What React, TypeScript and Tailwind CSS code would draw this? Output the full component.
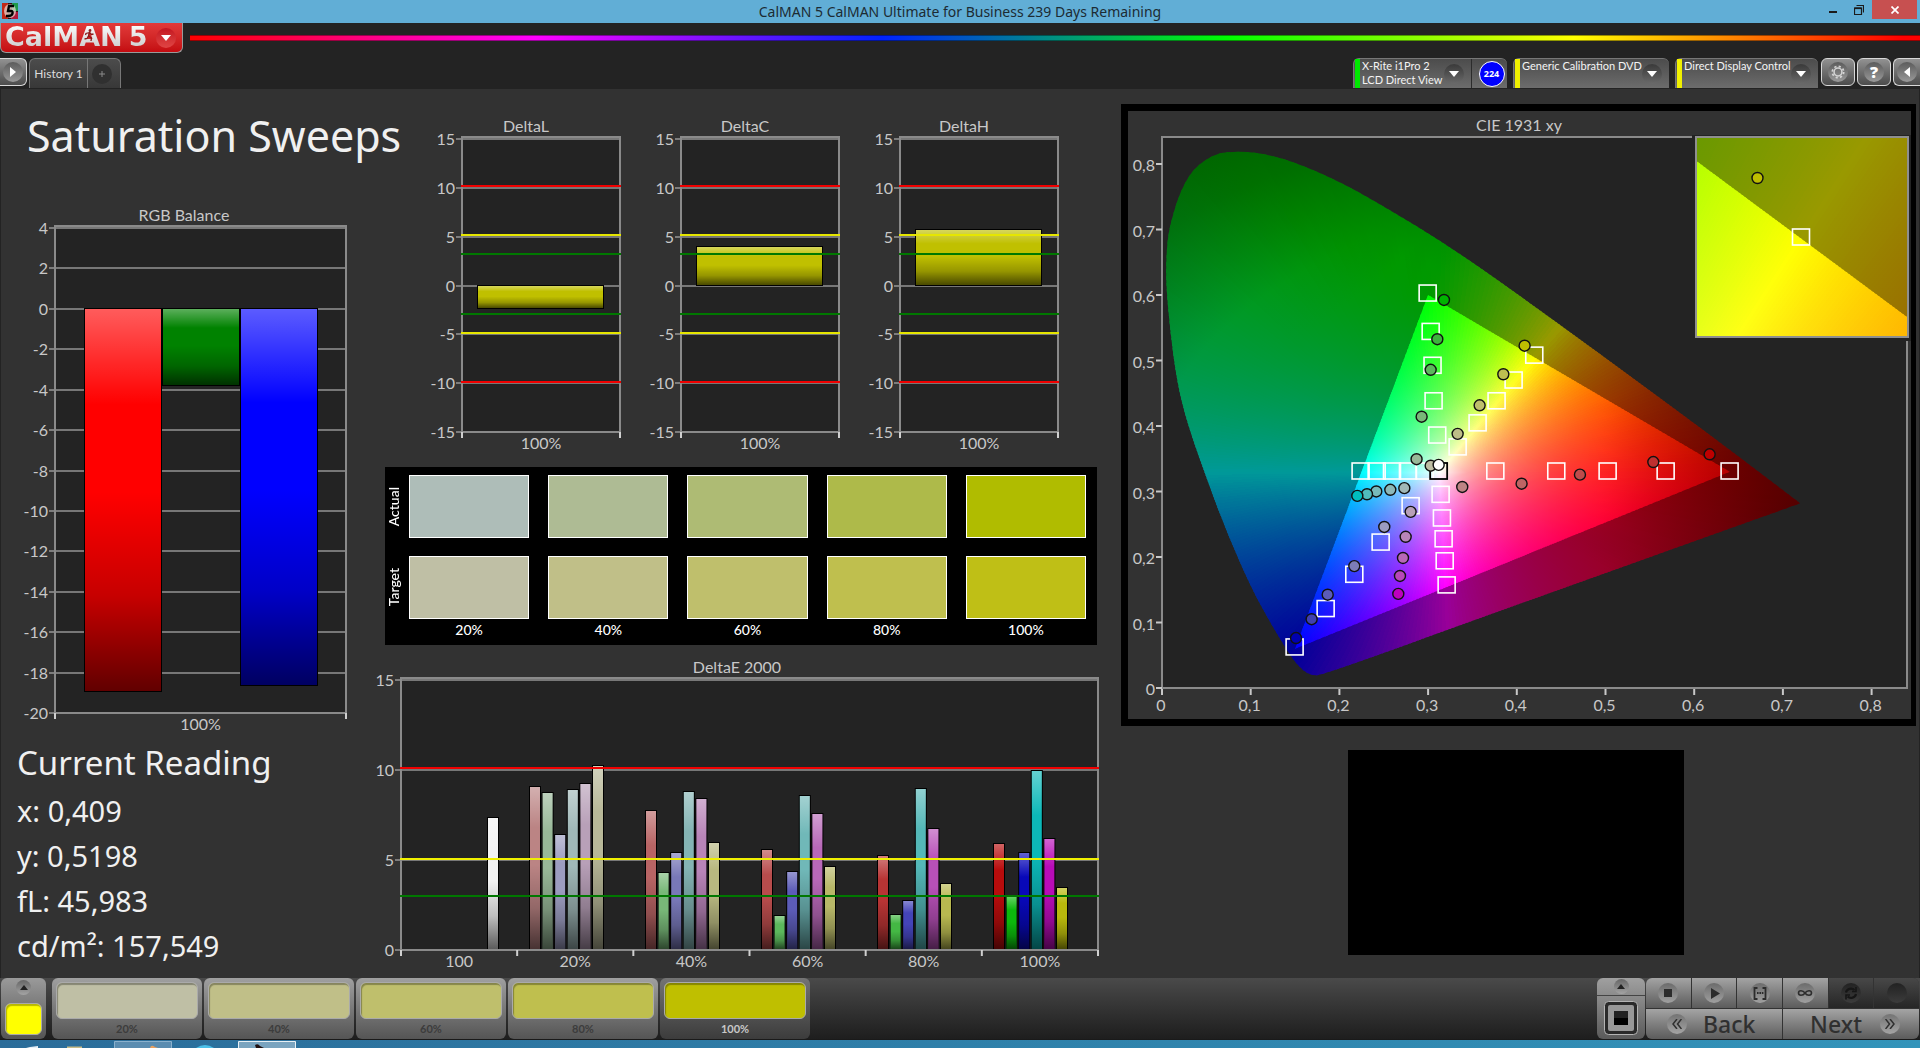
import { useState } from 'react'
import type { ReactNode } from 'react'

type Bar = { x: number; width: number; value: number; color: string }
type Limit = { value: number; color: string }
type Point = [number, number]

type ChartProps = {
  id: string
  title: string
  titleX: number
  width: number
  height: number
  plot: { x: number; y: number; w: number; h: number }
  min: number
  max: number
  step: number
  categories: string[]
  bars: Bar[]
  limits?: Limit[]
}

const BarChart = ({
  id,
  title,
  titleX,
  width,
  height,
  plot,
  min,
  max,
  step,
  categories,
  bars,
  limits = [],
}: ChartProps) => {
  const y = (v: number) => Math.round(plot.y + ((max - v) / (max - min)) * plot.h)
  const right = plot.x + plot.w
  const bottom = plot.y + plot.h
  const slot = plot.w / categories.length
  const ticks: number[] = []
  for (let v = max; v >= min; v -= step) ticks.push(v)

  return (
    <svg
      viewBox={`0 0 ${width} ${height}`}
      className="block h-auto w-full font-['Lato',sans-serif] text-[16px]"
      role="img"
      aria-label={title}
    >
      <defs>
        <linearGradient id={id} x1="0" y1="0" x2="0" y2="1">
          <stop offset="0" stopColor="#fff" stopOpacity="0.36" />
          <stop offset="0.25" stopColor="#fff" stopOpacity="0" />
          <stop offset="0.48" stopColor="#000" stopOpacity="0" />
          <stop offset="0.75" stopColor="#000" stopOpacity="0.22" />
          <stop offset="1" stopColor="#000" stopOpacity="0.62" />
        </linearGradient>
      </defs>
      <text x={titleX} y={plot.y - 7} textAnchor="middle" fill="#c8c8c8">
        {title}
      </text>
      <rect x={plot.x} y={plot.y - 2} width={plot.w} height={plot.h + 2} fill="#232323" />
      {ticks.map((v) => (
        <g key={v}>
          <line x1={plot.x} x2={right} y1={y(v)} y2={y(v)} stroke="#777" strokeWidth="2" />
          <line x1={plot.x - 6} x2={plot.x} y1={y(v)} y2={y(v)} stroke="#c8c8c8" />
          <text x={plot.x - 7} y={y(v) + 6} textAnchor="end" fill="#c8c8c8">
            {v}
          </text>
        </g>
      ))}
      {bars.map((b) => {
        const top = Math.min(y(0), y(b.value))
        const h = Math.abs(y(0) - y(b.value))
        return (
          <g key={b.x}>
            <rect x={plot.x + b.x} y={top - 1} width={b.width} height={h + 1} fill="#000" />
            <rect x={plot.x + b.x + 1} y={top} width={b.width - 2} height={h - 1} fill={b.color} />
            <rect x={plot.x + b.x + 1} y={top} width={b.width - 2} height={h - 1} fill={`url(#${id})`} />
          </g>
        )
      })}
      <rect
        x={plot.x}
        y={plot.y - 2}
        width={plot.w}
        height={plot.h + 2}
        fill="none"
        stroke="#8a8a8a"
        strokeWidth="2"
      />
      {limits.map((l) => (
        <line
          key={l.value}
          x1={plot.x - 1}
          x2={right + 1}
          y1={y(l.value) - 2}
          y2={y(l.value) - 2}
          stroke={l.color}
          strokeWidth="2"
        />
      ))}
      {categories.map((c, i) => (
        <text key={c} x={plot.x + slot * (i + 0.5)} y={bottom + 17} textAnchor="middle" fill="#c8c8c8">
          {c}
        </text>
      ))}
      {[...categories, 'end'].map((c, i) => (
        <line
          key={c}
          x1={plot.x + slot * i}
          x2={plot.x + slot * i}
          y1={bottom}
          y2={bottom + 6}
          stroke="#d0d0d0"
          strokeWidth="2"
        />
      ))}
    </svg>
  )
}

// ---- chart data ----

const rgbBars: Bar[] = [
  { x: 29, width: 78, value: -18.95, color: '#ff0000' },
  { x: 107, width: 78, value: -3.8, color: '#008200' },
  { x: 185, width: 78, value: -18.65, color: '#0000ff' },
]

const deltas = [
  { name: 'DeltaL', value: -2.4 },
  { name: 'DeltaC', value: 3.9 },
  { name: 'DeltaH', value: 5.7 },
]

const deltaLimits: Limit[] = [
  { value: 10, color: '#f00000' },
  { value: 5, color: '#e6e600' },
  { value: 3, color: '#007800' },
  { value: -3.1, color: '#007800' },
  { value: -5.1, color: '#e6e600' },
  { value: -10.1, color: '#f00000' },
]

const deltaEGroups = [
  {
    values: [9.08, 8.74, 6.41, 8.89, 9.22, 10.2],
    colors: ['#bb8484', '#98b898', '#9c9cc0', '#a0b8b8', '#b8a0b8', '#b8b898'],
  },
  {
    values: [7.74, 4.28, 5.41, 8.8, 8.41, 5.93],
    colors: ['#b86464', '#78b878', '#7878b8', '#84b4b4', '#b884b8', '#b8b880'],
  },
  {
    values: [5.58, 1.89, 4.36, 8.58, 7.58, 4.63],
    colors: ['#b84c4c', '#5cb85c', '#5c5cb8', '#70b8b8', '#b868b8', '#b8b868'],
  },
  {
    values: [5.24, 1.97, 2.72, 8.97, 6.74, 3.69],
    colors: ['#b83434', '#44b844', '#4444b8', '#54b8b8', '#b850b8', '#b8b850'],
  },
  {
    values: [5.91, 2.97, 5.41, 9.97, 6.19, 3.47],
    colors: ['#b80c0c', '#0cb80c', '#0808b8', '#0cb8b8', '#b80cb8', '#b8b80c'],
  },
]

const deltaEBars: Bar[] = [
  { x: 86, width: 12, value: 7.33, color: '#f2f2f2' },
  ...deltaEGroups.flatMap((g, i) =>
    g.values.map((value, j) => ({
      x: 116 * (i + 1) + 12 + j * 12.6,
      width: 12,
      value,
      color: g.colors[j],
    })),
  ),
]

const levels = ['20%', '40%', '60%', '80%', '100%']

// ---- CIE diagram ----

const WHITE: Point = [0.3127, 0.329]
const TRIANGLE: Point[] = [
  [0.64, 0.33],
  [0.3, 0.6],
  [0.15, 0.06],
]

const locus: Point[] = [
  [0.0714, 0.8186], [0.1033, 0.8186], [0.1447, 0.806], [0.2048, 0.77], [0.2574, 0.7295],
  [0.3175, 0.6796], [0.3814, 0.6204], [0.5, 0.504], [0.6219, 0.3823], [0.7196, 0.282], [0.7196, 0.282],
  [0.3814, 0.118], [0.1822, 0.0203], [0.1672, 0.019], [0.1522, 0.0346], [0.1371, 0.0658],
  [0.1183, 0.109], [0.0995, 0.156], [0.0733, 0.237], [0.0507, 0.318], [0.0281, 0.4054],
  [0.0169, 0.4677], [0.0094, 0.5425], [0.0049, 0.611], [0.0045, 0.6485], [0.0067, 0.692],
  [0.0131, 0.7264], [0.0206, 0.7575], [0.0319, 0.7855], [0.0432, 0.8011], [0.0582, 0.8136],
]

// quadratic curve through the midpoints
const smooth = (pts: Point[]) => {
  const mid = (a: Point, b: Point) => `${(a[0] + b[0]) / 2} ${(a[1] + b[1]) / 2}`
  const start = mid(pts[pts.length - 1], pts[0])
  return `M${start}${pts.map((p, i) => `Q${p[0]} ${p[1]} ${mid(p, pts[(i + 1) % pts.length])}`).join('')}Z`
}

const locusPath = smooth(locus)
const trianglePath = `M${TRIANGLE.map((p) => p.join(' ')).join('L')}Z`

const colorAt = (x: number, y: number, gain: number) => {
  const yy = Math.max(y, 0.005)
  const X = x / yy
  const Z = (1 - x - yy) / yy
  const lin = [
    3.2406 * X - 1.5372 - 0.4986 * Z,
    -0.9689 * X + 1.8758 + 0.0415 * Z,
    0.0557 * X - 0.204 + 1.057 * Z,
  ].map((c) => Math.max(c, 0))
  const top = Math.max(...lin)
  const red = Math.min(1, Math.max(0, (x - 0.5) / 0.22))
  const green = Math.min(1, Math.max(0, (Math.hypot(x - WHITE[0], y - WHITE[1]) - 0.33) / 0.2))
  const fade = (1 - 0.46 * red) * (x < 0.4 && y > WHITE[1] ? 1 - 0.34 * green : 1)
  const rgb = lin.map((c) => Math.round((255 * gain * fade * c) / top))
  return `rgb(${rgb.join(',')})`
}

// distance from the white point to the triangle edge along an angle
const edgeDistance = (a: number) => {
  const [dx, dy] = [Math.cos(a), Math.sin(a)]
  let best = 1
  TRIANGLE.forEach((p, i) => {
    const q = TRIANGLE[(i + 1) % 3]
    const [ex, ey] = [q[0] - p[0], q[1] - p[1]]
    const det = dx * ey - dy * ex
    const [wx, wy] = [p[0] - WHITE[0], p[1] - WHITE[1]]
    const t = (wx * ey - wy * ex) / det
    if (t > 0 && t < best) best = t
  })
  return best
}

type GamutProps = { id: string; from: number; to: number; step: number }

const Gamut = ({ id, from, to, step }: GamutProps) => {
  const count = Math.round((to - from) / step)
  const rays = Array.from({ length: count }, (_, i) => {
    const a = ((from + (i + 0.5) * step) * Math.PI) / 180
    const half = (step * 0.75 * Math.PI) / 180
    return { i, a, half, edge: edgeDistance(a) }
  })
  const at = (a: number, d: number): Point => [WHITE[0] + Math.cos(a) * d, WHITE[1] + Math.sin(a) * d]
  const wedge = (a: number, half: number, d: number) =>
    `M${WHITE.join(' ')}L${at(a - half, d).join(' ')}L${at(a + half, d).join(' ')}Z`

  const layer = (kind: 'out' | 'in') =>
    rays.map(({ i, a, half, edge }) => {
      const start = kind === 'in' ? 0 : edge
      const length = kind === 'in' ? edge : 0.56 - edge
      const n = kind === 'in' ? 10 : 6
      const [x1, y1] = at(a, start)
      const [x2, y2] = at(a, start + length)
      return (
        <g key={i}>
          <linearGradient id={`${id}-${kind}-${i}`} gradientUnits="userSpaceOnUse" x1={x1} y1={y1} x2={x2} y2={y2}>
            {Array.from({ length: n + 1 }, (_, s) => {
              const [x, y] = at(a, start + (length * s) / n)
              return <stop key={s} offset={s / n} stopColor={colorAt(x, y, kind === 'in' ? 1 : 0.6)} />
            })}
          </linearGradient>
          <path d={wedge(a, half, 0.7)} fill={`url(#${id}-${kind}-${i})`} shapeRendering="crispEdges" />
        </g>
      )
    })

  return (
    <>
      <clipPath id={`${id}-locus`}>
        <path d={locusPath} />
      </clipPath>
      <clipPath id={`${id}-triangle`}>
        <path d={trianglePath} />
      </clipPath>
      <g clipPath={`url(#${id}-locus)`}>{layer('out')}</g>
      <g clipPath={`url(#${id}-triangle)`}>{layer('in')}</g>
    </>
  )
}

const targets: Point[] = [
  [0.2995, 0.603], [0.3029, 0.5444], [0.305, 0.4927], [0.3062, 0.4385], [0.3103, 0.3862],
  [0.3333, 0.3681], [0.3558, 0.4048], [0.3772, 0.4385], [0.3964, 0.4702], [0.4197, 0.5082],
  [0.2239, 0.3313], [0.242, 0.3313], [0.2593, 0.3313], [0.2773, 0.3313], [0.2961, 0.3313],
  [0.3758, 0.3313], [0.4445, 0.3313], [0.5024, 0.3313], [0.5678, 0.3313], [0.6399, 0.3313],
  [0.3141, 0.2957], [0.3156, 0.2596], [0.3175, 0.2278], [0.3187, 0.1942], [0.3209, 0.1574],
  [0.2803, 0.2783], [0.2465, 0.2228], [0.2168, 0.1736], [0.1845, 0.1213], [0.1495, 0.0627],
]

const readings: [number, number, string][] = [
  [0.3179, 0.5924, '#00b400'], [0.3104, 0.5325, '#3cb43c'], [0.3029, 0.4858, '#5cb85c'],
  [0.2927, 0.4142, '#78b878'], [0.287, 0.3493, '#98b898'],
  [0.4088, 0.5226, '#bebe00'], [0.3848, 0.479, '#bebe50'], [0.3581, 0.4316, '#bebe6c'],
  [0.3333, 0.388, '#bebe88'], [0.3029, 0.3394, '#bebea4'],
  [0.2732, 0.3051, '#a0b8b8'], [0.2574, 0.3026, '#8cb8b8'], [0.2416, 0.3001, '#78baba'],
  [0.2311, 0.2958, '#50bcbc'], [0.2202, 0.2933, '#00bebe'],
  [0.3385, 0.3069, '#be8484'], [0.4054, 0.3119, '#be6464'], [0.4712, 0.3257, '#be4c4c'],
  [0.5539, 0.345, '#be3030'], [0.6174, 0.3568, '#be0000'],
  [0.2803, 0.2689, '#b8a0b8'], [0.2747, 0.2309, '#b884b8'], [0.2717, 0.1985, '#b868b8'],
  [0.2683, 0.1711, '#b848b8'], [0.2664, 0.1437, '#be00be'],
  [0.2506, 0.2459, '#9c9cc0'], [0.2168, 0.1861, '#7c7cb8'], [0.1868, 0.1424, '#5c5cb8'],
  [0.1687, 0.105, '#4040b0'], [0.1511, 0.0763, '#0000b0'],
  [0.3119, 0.3406, '#ffffff'],
]

const CieChart = () => {
  const px = (x: number) => 34 + x * 887
  const py = (y: number) => 577 - y * 655
  const ticks = [0, 1, 2, 3, 4, 5, 6, 7, 8]
  const label = (t: number) => (t === 0 ? '0' : `0,${t}`)

  return (
    <svg
      viewBox="0 0 783 608"
      className="block h-auto w-full bg-[#323232] font-['Lato',sans-serif] text-[16px]"
      role="img"
      aria-label="CIE 1931 xy"
    >
      <text x="391" y="20" textAnchor="middle" fill="#c8c8c8">
        CIE 1931 xy
      </text>
      <rect x="34" y="26" width="745" height="551" fill="#232323" stroke="#8a8a8a" strokeWidth="2" />
      {ticks.map((t) => (
        <g key={t} fill="#c8c8c8" stroke="none">
          <rect x="28" y={py(t / 10) - 1} width="6" height="2" />
          <rect x={px(t / 10) - 1} y="578" width="2" height="6" />
          <text x="27" y={py(t / 10) + 7} textAnchor="end">
            {label(t)}
          </text>
          <text x={px(t / 10) - 1} y="600" textAnchor="middle">
            {label(t)}
          </text>
        </g>
      ))}
      <g transform="translate(34 577) scale(887 -655)">
        <Gamut id="cie" from={0} to={360} step={1} />
      </g>
      {targets.map(([x, y]) => (
        <rect
          key={`${x}-${y}`}
          x={px(x) - 8.5}
          y={py(y) - 8}
          width="17"
          height="16"
          fill="none"
          stroke="#fff"
          strokeWidth="1.6"
        />
      ))}
      <rect x={px(0.3119) - 8.5} y={py(0.3313) - 8} width="17" height="16" fill="none" stroke="#000" strokeWidth="1.8" />
      {readings.map(([x, y, color]) => (
        <circle key={`${x}-${y}`} cx={px(x)} cy={py(y)} r="5.5" fill={color} stroke="#111" strokeWidth="1.4" />
      ))}

      {/* magnified area around the current target */}
      <rect x="564" y="24" width="219" height="206" fill="#232323" />
      <svg x="568" y="26" width="212" height="200" viewBox="0 0 212 200">
        <g transform="translate(-1686 2115) scale(4270 -3986)">
          <Gamut id="cie-zoom" from={30} to={85} step={0.25} />
        </g>
        <rect x="96.5" y="92" width="17" height="16" fill="none" stroke="#fff" strokeWidth="1.6" />
        <circle cx="61.5" cy="41" r="5.5" fill="#bebe00" stroke="#111" strokeWidth="1.4" />
      </svg>
      <rect x="568" y="26" width="212" height="200" fill="none" stroke="#8f8f8f" strokeWidth="2" />
    </svg>
  )
}

// ---- header ----

const Caret = () => (
  <span className="flex h-5 w-5 shrink-0 items-center justify-center rounded-full bg-linear-to-b from-[#3a3a3a] to-[#6a6a6a]">
    <svg viewBox="0 0 10 6" className="h-[6px] w-[10px]" fill="#fff">
      <path d="M0 0h10L5 6z" />
    </svg>
  </span>
)

const TitleBar = () => (
  <div className="grid h-[23px] grid-cols-[1fr_auto_1fr] items-start bg-[#61aed6]">
    <svg viewBox="0 0 16 16" className="mt-[3px] ml-[2px] h-4 w-4">
      <rect width="16" height="16" fill="#3a1010" />
      <path d="M0 0h6v16H0z" fill="#c02818" />
      <path d="M10 0h6v8h-6z" fill="#1f9a4c" />
      <path d="M9 9h7v7H9z" fill="#b0183c" />
      <ellipse cx="8" cy="8" rx="6" ry="7" fill="#e8d8d0" opacity="0.75" />
      <path d="M12 3H7L6 8h3q2 0 1.500 2.500T6 13H4" fill="none" stroke="#000" strokeWidth="2.400" />
    </svg>
    <p className="font-['Noto_Sans',sans-serif] text-[14px] leading-[23px] text-[#1c2b33]">
      CalMAN 5 CalMAN Ultimate for Business 239 Days Remaining
    </p>
    <div className="flex justify-end pr-[3px]">
      <button type="button" aria-label="Minimize" className="flex h-[19px] w-[26px] items-center justify-center">
        <span className="mt-1 h-[2px] w-2 bg-[#1b1b1b]" />
      </button>
      <button type="button" aria-label="Restore" className="flex h-[19px] w-[26px] items-center justify-center">
        <svg viewBox="0 0 10 10" className="h-[10px] w-[10px]" fill="none" stroke="#1b1b1b">
          <path d="M0.500 3h7v6.500h-7zM2.500 0.500h7v7" strokeWidth="1.200" />
          <path d="M0.500 3.300h7" strokeWidth="1.600" />
        </svg>
      </button>
      <button type="button" aria-label="Close" className="flex h-[19px] w-[45px] items-center justify-center bg-[#c75050]">
        <svg viewBox="0 0 8 8" className="h-2 w-2" stroke="#fff" strokeWidth="1.700">
          <path d="M0.500 0.500l7 7M7.500 0.500l-7 7" />
        </svg>
      </button>
    </div>
  </div>
)

const Logo = () => (
  <button
    type="button"
    className="relative flex h-[30px] w-[183px] items-center rounded-b-md border border-t-0 border-[#9a9a9a] bg-linear-to-b from-[#e23a3a] to-[#c40a10] pl-1 font-['DejaVu_Sans',sans-serif] text-[27px] leading-[28px] font-bold"
  >
    <span className="bg-linear-to-b from-white to-[#c4c4c4] bg-clip-text pb-[2px] text-transparent">CalMAN</span>
    <span className="ml-[6px] bg-linear-to-b from-white to-[#c4c4c4] bg-clip-text pb-[2px] text-transparent">5</span>
    <svg viewBox="0 0 10 12" className="absolute top-[6px] left-[83px] h-3 w-[10px]" fill="none" stroke="#8a1a1a" strokeWidth="1.300">
      <circle cx="6" cy="1.500" r="0.800" fill="#8a1a1a" />
      <path d="M5.500 3L4.500 7l3 2-0.500 3M4.500 7L3 9.500 0.500 10M5.500 3.500L2 4.500 1.500 6M5.500 3.500L7.500 5.500 9.500 5" />
    </svg>
    <span className="mr-[6px] ml-auto flex h-5 w-5 items-center justify-center rounded-full bg-linear-to-b from-[#c41420] to-[#e04444]">
      <svg viewBox="0 0 10 6" className="h-[6px] w-[10px]" fill="#fff">
        <path d="M0 0h10L5 6z" />
      </svg>
    </span>
  </button>
)

const SquareButton = ({ label, className = '', children }: { label: string; className?: string; children: ReactNode }) => (
  <button
    type="button"
    aria-label={label}
    className={`flex h-7 items-center justify-center rounded-md border border-[#d8d8d8] bg-linear-to-b from-[#929292] to-[#4c4c4c] ${className}`}
  >
    <span className="flex h-5 w-5 items-center justify-center rounded-full bg-linear-to-b from-[#5c5c5c] to-[#9a9a9a]">
      {children}
    </span>
  </button>
)

type DeviceProps = { lines: string[]; bar: string; className: string; badge?: string }

const DeviceButton = ({ lines, bar, className, badge }: DeviceProps) => (
  <div
    className={`flex h-[30px] rounded-t-md border-t border-l border-[#777] bg-linear-to-b from-[#4c4c4c] to-[#6c6c6c] pl-[1px] ${className}`}
  >
    <button type="button" className="flex min-w-0 flex-1 items-center text-left">
      <span className={`h-full w-[5px] shrink-0 ${bar}`} />
      <span className="ml-[2px] min-w-0 flex-1 self-start font-['Lato',sans-serif] text-[11px] leading-[14px] whitespace-nowrap text-[#f4f4f4]">
        {lines.map((l) => (
          <span key={l} className="block">
            {l}
          </span>
        ))}
      </span>
      <span className="mr-[7px]">
        <Caret />
      </span>
    </button>
    {badge && (
      <span className="flex w-9 items-center justify-center border-l border-[#2c2c2c] pl-1">
        <span className="flex h-[26px] w-[26px] items-center justify-center rounded-full border border-white bg-[#0000ff] font-['Noto_Sans',sans-serif] text-[9px] font-bold text-white">
          {badge}
        </span>
      </span>
    )}
  </div>
)

const Header = () => (
  <header>
    <div className="flex items-start">
      <Logo />
      <div className="mt-3 ml-[7px] h-[6px] flex-1 border-y border-black/40 bg-[linear-gradient(90deg,#f00_0%,#f0f_20%,#02f_40%,#0f0_60%,#ff0_80%,#f00_99%)]" />
    </div>
    <div className="mt-[5px] flex h-[31px] items-start">
      <SquareButton label="Open panel" className="w-[27px] rounded-l-none border-l-0">
        <svg viewBox="0 0 6 10" className="h-[10px] w-[6px]" fill="#fff">
          <path d="M0 0l6 5-6 5z" />
        </svg>
      </SquareButton>
      <div className="ml-[2px] flex h-[30px] w-[92px] rounded-t-md border border-b-0 border-[#777] bg-linear-to-b from-[#4c4c4c] to-[#383838]">
        <button type="button" className="w-[57px] font-['Lato',sans-serif] text-[12px] text-[#dcdcdc]">
          History 1
        </button>
        <button type="button" aria-label="Add tab" className="flex flex-1 items-center justify-center border-l border-[#777] pr-1">
          <span className="flex h-5 w-5 items-center justify-center rounded-full bg-[#303030]">
            <svg viewBox="0 0 6 6" className="h-[6px] w-[6px]" stroke="#8a8a8a">
              <path d="M3 0v6M0 3h6" />
            </svg>
          </span>
        </button>
      </div>
      <div className="ml-auto flex items-start">
        <DeviceButton lines={['X-Rite i1Pro 2', 'LCD Direct View']} bar="bg-[#00e800]" className="w-[154px]" badge="224" />
        <DeviceButton lines={['Generic Calibration DVD']} bar="bg-[#f0f000]" className="ml-[6px] w-[156px]" />
        <DeviceButton lines={['Direct Display Control']} bar="bg-[#f0f000]" className="ml-[6px] w-[143px]" />
        <SquareButton label="Settings" className="ml-[3px] w-[34px]">
          <svg viewBox="0 0 16 16" className="h-[14px] w-[14px]" fill="none" stroke="#d4d4d4">
            <circle cx="8" cy="8" r="4.500" strokeWidth="1.800" />
            <circle cx="8" cy="8" r="6.500" strokeWidth="2" strokeDasharray="2.500 2.600" />
          </svg>
        </SquareButton>
        <SquareButton label="Help" className="ml-[2px] w-[34px]">
          <span className="font-['Noto_Sans',sans-serif] text-[16px] leading-5 font-black text-white">?</span>
        </SquareButton>
        <SquareButton label="Collapse" className="ml-[2px] w-[27px] rounded-r-none border-r-0">
          <svg viewBox="0 0 6 10" className="h-[10px] w-[6px]" fill="#fff">
            <path d="M6 0L0 5l6 5z" />
          </svg>
        </SquareButton>
      </div>
    </div>
  </header>
)

// ---- swatches ----

const swatchRows = [
  {
    name: 'Actual',
    cells: ['bg-[#aebdb8]', 'bg-[#aebb94]', 'bg-[#aebb74]', 'bg-[#aeba4a]', 'bg-[#b0bc00]'],
  },
  {
    name: 'Target',
    cells: ['bg-[#bfbfa5]', 'bg-[#c0bf88]', 'bg-[#bfbf6c]', 'bg-[#bfbf4e]', 'bg-[#bfbf16]'],
  },
]

const SwatchPanel = () => (
  <div className="bg-black pt-2 pr-[11px] font-['Lato',sans-serif] text-[14px] font-medium text-white">
    <div className="flex flex-col gap-[18px]">
      {swatchRows.map((row) => (
        <div key={row.name} className="flex h-[63px]">
          <div className="flex w-6 shrink-0 items-center justify-center">
            <span className="rotate-180 pl-[7px] leading-4 [writing-mode:vertical-rl]">{row.name}</span>
          </div>
          <div className="grid flex-1 grid-cols-5 gap-[19px]">
            {row.cells.map((c) => (
              <div key={c} className={`border border-white ${c}`} />
            ))}
          </div>
        </div>
      ))}
    </div>
    <div className="grid grid-cols-5 gap-[19px] pt-[1px] pb-[6px] pl-6 text-center leading-[19px]">
      {levels.map((l) => (
        <span key={l}>{l}</span>
      ))}
    </div>
  </div>
)

// ---- bottom bar ----

const patterns = [
  { label: '20%', color: 'bg-[#bfbfa5]' },
  { label: '40%', color: 'bg-[#c0bf88]' },
  { label: '60%', color: 'bg-[#bfbf6c]' },
  { label: '80%', color: 'bg-[#bfbf4e]' },
  { label: '100%', color: 'bg-[#bfbf00]' },
]

const UpCircle = () => (
  <span className="flex h-[15px] w-[15px] items-center justify-center rounded-full bg-linear-to-b from-[#666] to-[#a4a4a4]">
    <svg viewBox="0 0 8 5" className="h-[5px] w-2" fill="#222">
      <path d="M0 5h8L4 0z" />
    </svg>
  </span>
)

const controls: { label: string; on: boolean; icon: ReactNode }[] = [
  { label: 'Stop', on: true, icon: <path d="M6 6h8v8H6z" fill="#2c2c2c" /> },
  { label: 'Read', on: true, icon: <path d="M7 5l9 5.500-9 5.500z" fill="#2c2c2c" /> },
  {
    label: 'Read series',
    on: true,
    icon: (
      <g fill="none" stroke="#2c2c2c" strokeWidth="1.800">
        <path d="M7.500 5H4.500v11h3M12.500 5h3v11h-3" />
        <path d="M7 10h6.400" strokeDasharray="1.600 0.800" />
      </g>
    ),
  },
  {
    label: 'Read continuous',
    on: true,
    icon: (
      <path
        d="M10 10C8 7 3.500 7 3.500 10S8 13 10 10s6.500-3 6.500 0-4.500 3-6.500 0z"
        fill="none"
        stroke="#2c2c2c"
        strokeWidth="1.600"
      />
    ),
  },
  {
    label: 'Refresh',
    on: false,
    icon: (
      <g fill="none" stroke="#161616" strokeWidth="2.200">
        <path d="M5 9.500a5 4.500 0 0 1 8.500-2.500M15 11a5 4.500 0 0 1-8.500 2.500" />
        <path d="M15 4v4.500h-4M5 16.500V12h4" strokeWidth="1.600" />
      </g>
    ),
  },
  { label: 'Record', on: false, icon: null },
]

const BottomBar = () => {
  const [selected, setSelected] = useState('100%')

  return (
    <footer className="flex h-[62px] border-b border-[#1a1a1a] bg-linear-to-b from-[#4a4a4a] to-[#1e1e1e] px-[1px] font-['Lato',sans-serif]">
      <button
        type="button"
        aria-label="Pattern color"
        className="flex w-[45px] flex-col items-center rounded-md bg-linear-to-b from-[#9a9a9a] to-[#555] pt-[2px]"
      >
        <UpCircle />
        <span className="mt-2 h-[32px] w-[37px] rounded-md border border-[#aaa] bg-[#ffff00] shadow-[inset_1px_2px_1px_#b8b800]" />
      </button>
      <div className="ml-[6px] flex gap-[2px]">
        {patterns.map((p) => {
          const active = p.label === selected
          return (
            <button
              key={p.label}
              type="button"
              aria-pressed={active}
              onClick={() => setSelected(p.label)}
              className={`flex w-[150px] flex-col items-center rounded-md bg-linear-to-b pt-1 text-[11px] leading-5 font-bold ${
                active ? 'from-[#747474] to-[#3c3c3c] text-[#c8c8c8]' : 'from-[#a0a0a0] to-[#555] text-[#3c3c3c]'
              }`}
            >
              <span
                className={`h-[38px] w-[142px] rounded-md border border-[#aaa] shadow-[inset_1px_2px_1px_rgba(0,0,0,0.3)] ${p.color}`}
              />
              {p.label}
            </button>
          )
        })}
      </div>
      <div className="ml-auto flex gap-[1px]">
        <div className="flex w-12 flex-col overflow-hidden rounded-md">
          <button
            type="button"
            aria-label="More"
            className="flex h-[18px] items-center justify-center border-b border-[#444] bg-linear-to-b from-[#a0a0a0] to-[#8c8c8c]"
          >
            <UpCircle />
          </button>
          <button type="button" aria-label="Window" className="flex flex-1 items-center justify-center bg-linear-to-b from-[#8c8c8c] to-[#5a5a5a]">
            <svg viewBox="0 0 34 34" className="h-[34px] w-[34px]">
              <rect x="0.500" y="0.500" width="33" height="33" rx="4" fill="#2a2a2a" stroke="#b4b4b4" />
              <rect x="4" y="4" width="26" height="26" rx="2" fill="#989898" />
              <path d="M10 10h14v14H10z" />
              <path d="M10 10h14v7H10z" fill="#222" />
            </svg>
          </button>
        </div>
        <div className="flex w-[273px] flex-col gap-[1px] overflow-hidden rounded-md bg-[#333]">
          <div className="grid h-[30px] grid-cols-6 gap-[1px]">
            {controls.map((c) => (
              <button
                key={c.label}
                type="button"
                aria-label={c.label}
                disabled={!c.on}
                className={`flex items-center justify-center bg-linear-to-b ${
                  c.on ? 'from-[#a4a4a4] to-[#5c5c5c]' : 'from-[#484848] to-[#262626]'
                }`}
              >
                <span
                  className={`h-5 w-5 rounded-full bg-linear-to-b ${
                    c.on ? 'from-[#6c6c6c] to-[#a0a0a0]' : 'from-[#222] to-[#3c3c3c]'
                  }`}
                >
                  <svg viewBox="0 0 20 20" className="h-5 w-5">
                    {c.icon}
                  </svg>
                </span>
              </button>
            ))}
          </div>
          <div className="grid flex-1 grid-cols-2 gap-[1px] font-['Noto_Sans',sans-serif] text-[23px] leading-[30px] font-medium text-[#303030]">
            <button type="button" className="flex items-center bg-linear-to-b from-[#a4a4a4] to-[#5c5c5c] pl-[21px]">
              <span className="mr-4 flex h-5 w-5 items-center justify-center rounded-full bg-linear-to-b from-[#747474] to-[#a4a4a4]">
                <svg viewBox="0 0 10 10" className="h-[10px] w-[10px]" fill="none" stroke="#303030" strokeWidth="1.500">
                  <path d="M5 0L1 5l4 5M9.500 0l-4 5 4 5" />
                </svg>
              </span>
              Back
            </button>
            <button type="button" className="flex items-center justify-end bg-linear-to-b from-[#a4a4a4] to-[#5c5c5c] pr-[19px]">
              Next
              <span className="ml-[18px] flex h-5 w-5 items-center justify-center rounded-full bg-linear-to-b from-[#747474] to-[#a4a4a4]">
                <svg viewBox="0 0 10 10" className="h-[10px] w-[10px]" fill="none" stroke="#303030" strokeWidth="1.500">
                  <path d="M0.500 0l4 5-4 5M5 0l4 5-4 5" />
                </svg>
              </span>
            </button>
          </div>
        </div>
      </div>
    </footer>
  )
}

const TaskBar = () => (
  <div className="flex h-2 overflow-hidden bg-linear-to-r from-[#2b6c99] to-[#3394ba]">
    <svg viewBox="0 0 300 8" className="h-2 w-[300px]">
      <path d="M26 8l4-1 8-1v2z" fill="#e8f0f8" />
      <path d="M67 8v-1.500h15V8z" fill="#c8bc88" />
      <path d="M114.500 9V1.500h57V9" fill="#5a8cb0" stroke="#8ab0cc" />
      <path d="M150 8q1-4 5-1l3 1z" fill="#e8a060" />
      <path d="M196 8q9-6 18 0z" fill="#4cc0e8" />
      <path d="M238.500 9V1.500h57V9" fill="#7aa4bf" stroke="#e8f0f4" />
      <path d="M255 5q3-2 5 1l4 2h-8z" fill="#201010" />
    </svg>
  </div>
)

const currentReading = ['x: 0,409', 'y: 0,5198', 'fL: 45,983', 'cd/m²: 157,549']

export default function App() {
  return (
    <div className="flex min-h-screen flex-col overflow-hidden bg-[#232323]">
      <TitleBar />
      <Header />
      <main className="grid flex-1 grid-cols-[minmax(0,371fr)_minmax(0,748fr)_minmax(0,799fr)] border-x border-[#232323] bg-[#323232]">
        <section className="font-['Noto_Sans',sans-serif] text-[#f0f0f0]">
          <h1 className="pt-[19px] pl-[26px] text-[43px] leading-[56px] whitespace-nowrap">Saturation Sweeps</h1>
          <div className="mt-9">
            <BarChart
              id="rgb-shade"
              title="RGB Balance"
              titleX={183}
              width={371}
              height={535}
              plot={{ x: 54, y: 28, w: 291, h: 485 }}
              min={-20}
              max={4}
              step={2}
              categories={['100%']}
              bars={rgbBars}
            />
          </div>
          <div className="mt-[7px] pl-4">
            <h2 className="text-[33px] leading-[42px]">Current Reading</h2>
            <div className="mt-1 text-[29px] leading-[45px]">
              {currentReading.map((r) => (
                <p key={r}>{r}</p>
              ))}
            </div>
          </div>
        </section>

        <section className="pt-[23px]">
          <div className="grid grid-cols-3 pr-[61px] pl-[30px]">
            {deltas.map((d) => (
              <BarChart
                key={d.name}
                id={`${d.name}-shade`}
                title={d.name}
                titleX={124}
                width={219}
                height={343}
                plot={{ x: 60, y: 27, w: 158, h: 293 }}
                min={-15}
                max={15}
                step={5}
                categories={['100%']}
                bars={[{ x: 15, width: 127, value: d.value, color: '#c0c000' }]}
                limits={deltaLimits}
              />
            ))}
          </div>
          <div className="mt-3 mr-[23px] ml-[13px]">
            <SwatchPanel />
          </div>
          <BarChart
            id="deltae-shade"
            title="DeltaE 2000"
            titleX={365}
            width={748}
            height={330}
            plot={{ x: 29, y: 35, w: 697, h: 270 }}
            min={0}
            max={15}
            step={5}
            categories={['100', ...levels]}
            bars={deltaEBars}
            limits={[
              { value: 10, color: '#f00000' },
              { value: 4.95, color: '#f0f000' },
              { value: 2.9, color: '#007800' },
            ]}
          />
        </section>

        <section className="pt-[15px] pr-[3px] pl-[1px]">
          <div className="border-[7px] border-r-[5px] border-black">
            <CieChart />
          </div>
          <div className="flex justify-center pt-6 pr-[6px]">
            <div className="h-[205px] w-[336px] bg-black" />
          </div>
        </section>
      </main>
      <BottomBar />
      <TaskBar />
    </div>
  )
}
